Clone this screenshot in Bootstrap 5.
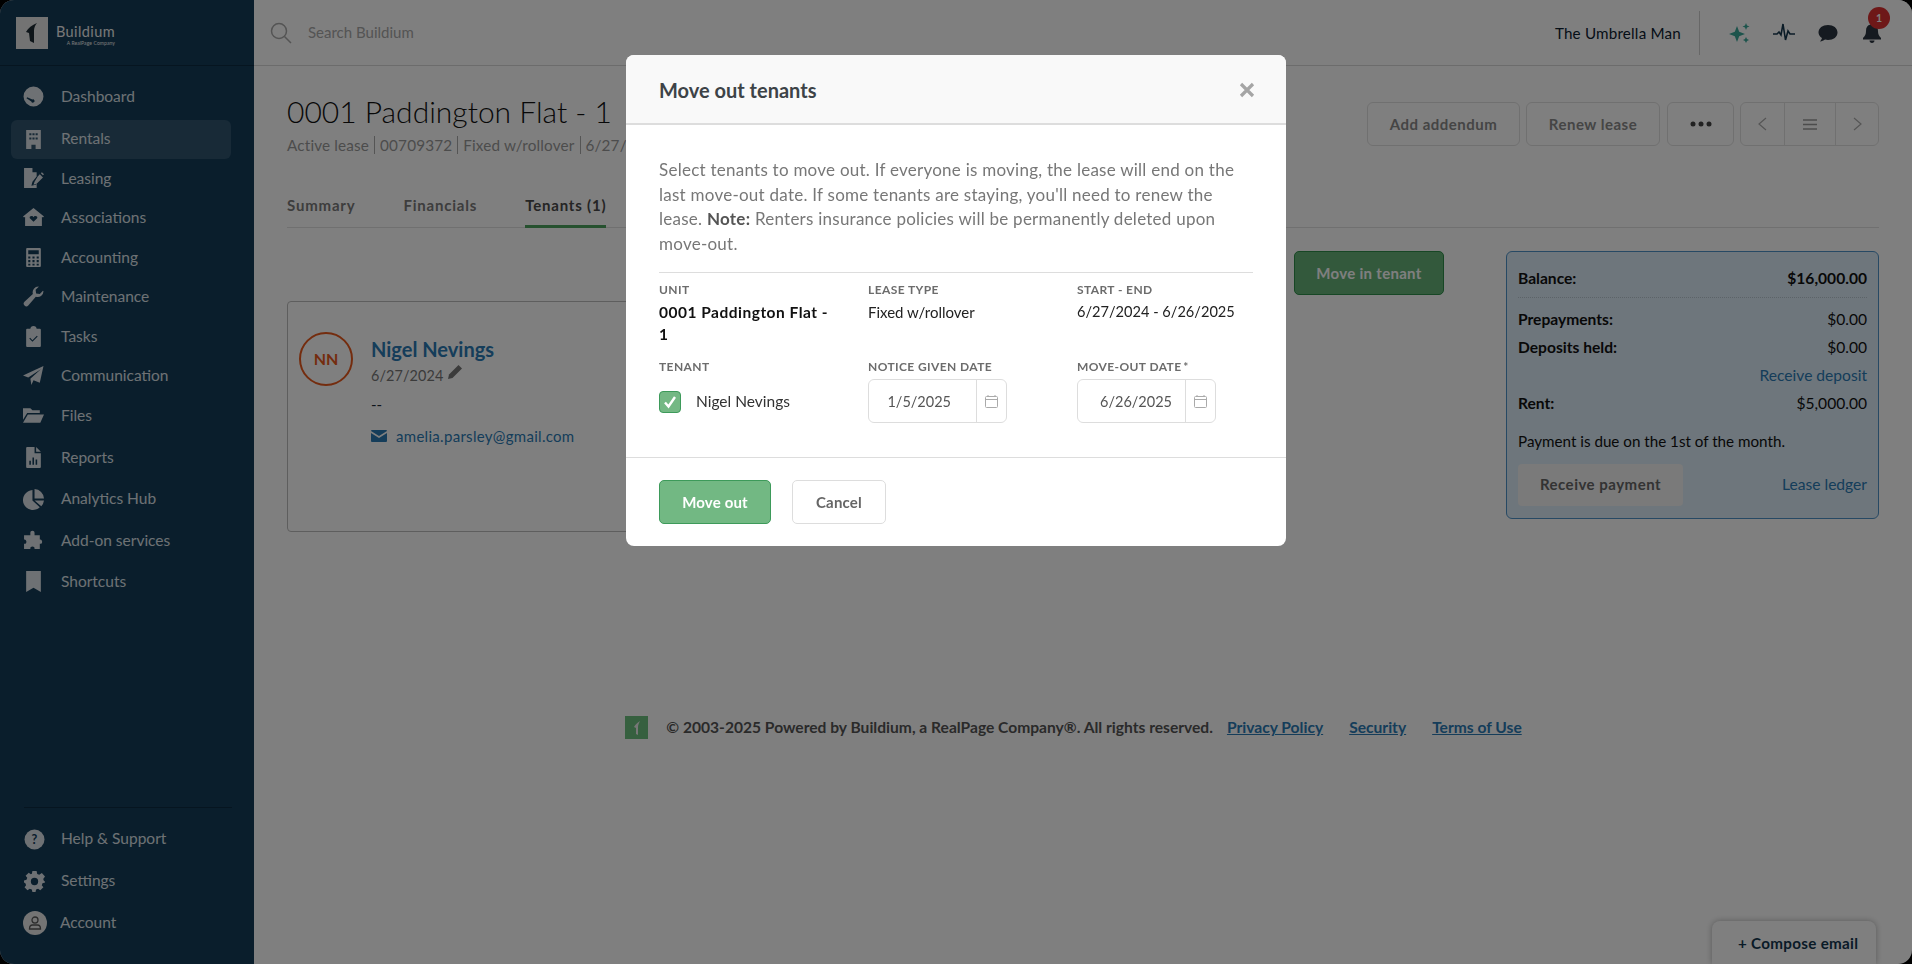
<!DOCTYPE html>
<html lang="en">
<head>
<meta charset="utf-8">
<title>Move out tenants</title>
<link href="https://cdn.jsdelivr.net/npm/bootstrap@5.3.0/dist/css/bootstrap.min.css" rel="stylesheet">
<style>
html,body{height:100%;overflow:hidden;background:#000}
body{font-family:"Lato","Liberation Sans",sans-serif;color:#1c2b36;font-size:15px}
.app-frame{height:964px;width:1912px;display:flex;background:#fff;border-radius:14px;overflow:hidden}
.side-rail{width:254px;flex:none;background:#143c59;color:#dde3e8;display:flex;flex-direction:column}
.side-brand{height:66px;flex:none;border-bottom:1px solid #0d2a40;display:flex;align-items:center;padding:0 16px;gap:8px}
.brand-text{line-height:1;color:#f0f0f0;font-size:14.5px;letter-spacing:.4px;margin-top:6px}
.brand-text span{display:block;font-size:5px;text-align:right;letter-spacing:.1px;margin-top:2px}
.side-nav{padding-top:11px;flex:1}
.nav-row{height:39.5px;display:flex;align-items:center;gap:17px;font-size:15.5px;margin:0 23px 0 11px;padding-left:12px;border-radius:6px}
.nav-row svg{width:21px;height:21px;flex:none;fill:currentColor}
.nav-row.current{background:#30546e;height:39px;margin-top:3px}
.nav-row.roomy{height:41.4px}
.nav-row.first-roomy{margin-top:2px}
.side-foot{border-top:1px solid #0d2a40;margin:0 22px 0 24px;padding-top:10px;height:157px}
.side-foot .nav-row{margin:0;padding-left:0;height:42px;gap:16px}
.side-foot .nav-row.acct-row{gap:13px}
.acct-dot{width:24px;height:24px;flex:none;border-radius:50%;background:#e8e8e8;color:#555;display:flex;align-items:center;justify-content:center;margin-left:-1px}
.acct-dot svg{width:16px;height:16px;fill:none;stroke:#5a5a5a;stroke-width:1.3}
.work-area{flex:1;display:flex;flex-direction:column;min-width:0;position:relative}
.top-strip{height:66px;flex:none;border-bottom:1px solid #d8d8d8;display:flex;align-items:center;padding:0 29px 0 16px;background:#fff}
.search-word{color:#a8a8a8;font-size:15px;margin-left:16px}
.org-name{font-size:15.2px;letter-spacing:.2px;color:#0d2030;padding-right:18px;height:44px;line-height:44px;border-right:1px solid #cfcfcf;margin-right:29px}
.tool-ico{width:22px;height:22px;margin-right:22px;position:relative}
.tool-ico svg{width:22px;height:22px;display:block}
.tool-ico:last-child{margin-right:0}
.bell-count{position:absolute;top:-15px;left:7px;width:22px;height:22px;border-radius:50%;background:#dc3030;color:#fff;font-size:10.5px;font-weight:700;text-align:center;line-height:22px}
.page-body{padding:0 33px;flex:1;display:flex;flex-direction:column}
.head-row{display:flex;justify-content:space-between;padding-top:27px;height:113px}
.page-title{font-size:30px;font-weight:300;color:#111;line-height:36px;margin:0}
.page-sub{font-size:15.3px;color:#999;margin-top:7px;line-height:18px;letter-spacing:.15px}
.page-sub i{font-style:normal;border-left:1px solid #aaa;margin:0 5px}
.action-set{display:flex;margin-top:9px}
.ghost-btn{height:44px;border:1px solid #e0e0e0;border-radius:6px;background:#fff;color:#8a8a8a;font-weight:700;font-size:15px;letter-spacing:.5px;padding:0;display:flex;align-items:center;justify-content:center}
.btn-addendum{width:153px;margin-right:6px}.btn-renew{width:134px;margin-right:7px}.btn-more{width:67px;margin-right:6px}
.pager-set{display:flex;width:139px;height:44px;border:1px solid #e0e0e0;border-radius:6px}
.pager-set div{display:flex;align-items:center;justify-content:center;height:100%}
.pager-set div:nth-child(1){width:44px;border-right:1px solid #e0e0e0}
.pager-set div:nth-child(2){width:51px;border-right:1px solid #e0e0e0}
.pager-set div:nth-child(3){flex:1}
.tab-strip{display:flex;gap:48px;height:49px;border-bottom:1px solid #e0e0e0;font-weight:700;font-size:15px;letter-spacing:.8px;color:#7a7a7a}
.tab-strip div{height:49px;padding-top:15px}
.tab-strip .on{color:#4a4a4a;border-bottom:3px solid #4da35f}
.content-row{display:flex;gap:62px;padding-top:23px}
.left-pane{flex:1;min-width:0}
.cta-green{height:44px;width:150px;margin-left:auto;background:#66b279;border:1px solid #2f8f4a;border-radius:5px;color:#fff;font-weight:700;font-size:15px;letter-spacing:.3px;display:flex;align-items:center;justify-content:center}
.person-card{margin-top:6px;height:231px;width:800px;border:1px solid #bdbdbd;border-radius:4px;padding:30px 11px;display:flex;gap:18px}
.avatar-ring{width:54px;height:54px;border:2px solid #e8591c;border-radius:50%;color:#e8591c;font-weight:700;font-size:16px;display:flex;align-items:center;justify-content:center;flex:none}
.person-name{font-size:20px;font-weight:700;color:#2a7ab5;line-height:24px;margin-top:5px}
.person-date{font-size:14.4px;color:#777;margin-top:4px;display:flex;align-items:center;gap:4px;letter-spacing:.1px}
.person-date svg{margin-top:-7px}
.person-dash{font-size:15px;margin-top:8px;line-height:18px}
.person-mail{font-size:15px;color:#2a7ab5;margin-top:12px;display:flex;align-items:center;gap:9px;letter-spacing:.3px}
.money-box{width:373px;height:268px;flex:none;background:#dcecf8;border:1px solid #4f93c8;border-radius:6px;padding:0 11px;font-size:15.6px;line-height:22.5px;color:#111}
.money-line{display:flex;justify-content:space-between}
.money-line b{font-weight:700}
.bal-line{padding:15px 0 7px;border-bottom:1px dotted #b8c6d0;font-weight:700}
.prep-line{margin-top:10px}.dep-line{margin-top:5.5px}.rec-line{margin-top:6px}.rent-line{margin-top:5.5px}.due-line{margin-top:15px;font-size:15.2px}.pay-line{margin-top:11.5px}
.money-link{color:#2a7ab5}
.pay-btn{width:165px;height:42px;background:#f4f4f4;border-radius:4px;color:#666;font-weight:700;font-size:15px;display:flex;align-items:center;justify-content:center;letter-spacing:.5px}
.foot-line{position:absolute;left:0;right:19px;top:716px;display:flex;justify-content:center;align-items:center;font-size:15.6px;color:#555}
.foot-line a{color:#2a7ab5;margin-left:26px;font-weight:700}
.foot-line .credit{font-weight:700;margin:0 -12px 0 18px}
.compose-tab{position:absolute;right:36px;bottom:0;width:164px;height:43px;background:#fff;border-radius:8px 8px 0 0;box-shadow:0 0 6px rgba(0,0,0,.3);padding:13px 0 0 26px;font-weight:700;font-size:15.2px;color:#14364f;letter-spacing:.3px;line-height:18px}
.modal.out-modal{display:block}
.out-modal .modal-dialog{max-width:660px;width:660px;margin:55px 0 0 626px}
.out-modal .modal-content{border:0;border-radius:8px;overflow:hidden;height:491px}
.out-modal .modal-header{height:70px;background:#f9f9f9;border-bottom:2px solid #ddd;padding:2px 31px 0 33px;border-radius:0}
.out-modal .modal-title{font-size:20px;font-weight:700;color:#3d4347}
.x-close{width:16px;height:16px;display:block}
.out-modal .modal-body{padding:33px 33px 0;height:332px;flex:none}
.lead-copy{font-size:17px;letter-spacing:.25px;line-height:24.5px;color:#777;margin:0 0 16px;width:590px}
.lead-copy b{color:#555}
.fact-grid{border-top:1px solid #ddd;display:grid;grid-template-columns:209px 209px 1fr;padding-top:9px}
.fact-label{font-size:12px;font-weight:700;color:#6c6c6c;letter-spacing:.4px;line-height:16px}
.fact-val{font-size:15px;color:#222;line-height:22px;margin-top:3px;height:44px}
.fact-val.strong{font-weight:700;color:#111;width:175px;font-size:15.5px;letter-spacing:.5px}
.fact-val.range{font-size:14.6px}
.second-row{padding-top:14px}
.out-check{display:flex;align-items:center;margin-top:15px;gap:15px;font-size:15.5px;color:#333}
.check-box{width:22px;height:22px;background:#74b884;border:1px solid #3d9a5a;border-radius:4px;display:flex;align-items:center;justify-content:center}
.date-field{display:flex;width:139px;height:44px;border:1px solid #ddd;border-radius:6px;margin-top:4px;font-size:14.5px;color:#555}
.date-field .dval{width:108px;border-right:1px solid #ddd;display:flex;align-items:center;justify-content:flex-end;padding:2px 25px 0 0}
.date-field .dico{flex:1;display:flex;align-items:center;justify-content:center}
.date-field.wide .dval{padding-right:13px}
.out-modal .modal-footer{justify-content:flex-start;border-top:1px solid #ddd;padding:22px 33px;gap:21px;border-radius:0;height:89px}
.out-modal .modal-footer>*{margin:0}
.btn-moveout{width:112px;height:44px;background:#72b883;border:1px solid #3d9a5a;color:#fff;font-weight:700;font-size:15px;border-radius:5px;padding:0;letter-spacing:.15px}
.btn-cancel{width:94px;height:44px;background:#fff;border:1px solid #ddd;color:#666;font-weight:700;font-size:15px;border-radius:5px;padding:0;letter-spacing:.2px}
</style>
</head>
<body>
<div class="app-frame">
  <aside class="side-rail">
    <div class="side-brand">
      <svg width="32" height="32" viewBox="0 0 32 32"><rect width="32" height="32" fill="#e6e6e6"/><path d="M21 6C16 8 12 11 10 15l3 1 1 8 4 2V14c0-3 1-6 3-8z" fill="#1d2a33"/></svg>
      <div class="brand-text">Buildium<span>A RealPage Company</span></div>
    </div>
    <nav class="side-nav">
      <div class="nav-row"><svg viewBox="0 0 20 20"><path fill-rule="evenodd" d="M10 .5a9.5 9.5 0 1 1 0 19 9.5 9.5 0 0 1 0-19zM4 10.6l-.7 1 4.6 3.2a1.6 1.6 0 1 0 1-2z"/></svg>Dashboard</div>
      <div class="nav-row current"><svg viewBox="0 0 20 20"><path fill-rule="evenodd" d="M3 1h14v18h-5v-4H8v4H3zM6 4v2h2V4zM9 4v2h2V4zM12 4v2h2V4zM6 8v2h2V8zM9 8v2h2V8zM12 8v2h2V8z"/></svg>Rentals</div>
      <div class="nav-row"><svg viewBox="0 0 20 20"><path d="M1 0h8l4 4v4l-4 5-1 4 4-1 1-1v4H1zM9 0v4h4z"/><path d="M14 8l2-2 3 3-6 6-3 1 1-3zM17 5l1-1 2 2-1 1z"/></svg>Leasing</div>
      <div class="nav-row"><svg viewBox="0 0 20 20"><path fill-rule="evenodd" d="M10 1l10 8-1 1-1-.6V18H2V9.400L1 10 0 9zM10 14l3.500-3.400c1-1.600-2.500-3-3.500-.8-1-2.200-4.500-.8-3.500.8z"/></svg>Associations</div>
      <div class="nav-row"><svg viewBox="0 0 20 20"><path fill-rule="evenodd" d="M4 1h12a1 1 0 0 1 1 1v16a1 1 0 0 1-1 1H4a1 1 0 0 1-1-1V2a1 1 0 0 1 1-1zM5 3v4h10V3zM5 9v2h2V9zM9 9v2h2V9zM13 9v2h2V9zM5 12.500v2h2v-2zM9 12.500v2h2v-2zM13 12.500v2h2v-2zM5 16v1.500h2V16zM9 16v1.500h2V16zM13 16v1.500h2V16z"/></svg>Accounting</div>
      <div class="nav-row"><svg viewBox="0 0 20 20"><path d="M19.500 5a5.500 5.500 0 0 1-7.300 5.200L5 18.500a2.500 2.500 0 0 1-3.600-3.500l8-7.400A5.500 5.500 0 0 1 15 .6l-3 3 .5 3.500 3.500.5 3-3c.3.100.5.200.5.400z"/></svg>Maintenance</div>
      <div class="nav-row"><svg viewBox="0 0 20 20"><path fill-rule="evenodd" d="M7 2.500c0-1.300 1.300-2.500 3-2.500s3 1.200 3 2.500h3a1 1 0 0 1 1 1V19a1 1 0 0 1-1 1H4a1 1 0 0 1-1-1V3.500a1 1 0 0 1 1-1zM6 12l3 3 5-5-.8-.8L9 13.500 6.800 11.200z"/></svg>Tasks</div>
      <div class="nav-row"><svg viewBox="0 0 20 20"><path d="M19.500 1L16 17l-6-2.500L8 19l-1-6L17 4 5 11.800 0 10z"/></svg>Communication</div>
      <div class="nav-row"><svg viewBox="0 0 20 20"><path d="M0 3h7l2 2h7v2.500H4L0 14zM4.600 9H20l-3.500 8H0z"/></svg>Files</div>
      <div class="nav-row roomy first-roomy"><svg viewBox="0 0 20 20"><path fill-rule="evenodd" d="M4 0h7v6h6v13a1 1 0 0 1-1 1H4a1 1 0 0 1-1-1V1a1 1 0 0 1 1-1zM6 13v4h1.500v-4zM9 10v7h1.500v-7zM12 12v5h1.500v-5zM12.500 0L17 4.500h-4.500z"/></svg>Reports</div>
      <div class="nav-row roomy"><svg viewBox="0 0 20 20"><path d="M9 1v10l7 6.400A9.500 9.500 0 1 1 9 1zM11 0a9.500 9.500 0 0 1 9 9H11zM11 11h9a9.500 9.500 0 0 1-2.600 5.400z"/></svg>Analytics Hub</div>
      <div class="nav-row roomy"><svg viewBox="0 0 20 20"><path d="M7 3c-.3-3 4.300-3 4-.0v2h5v4c3-.5 3 5 0 4v5h-5c.5-3-4.500-3-4 0H1v-5c3 1 3-4.500 0-4V5h6z"/></svg>Add-on services</div>
      <div class="nav-row roomy"><svg viewBox="0 0 20 20"><path d="M3 0h14v20l-7-4-7 4z"/></svg>Shortcuts</div>
    </nav>
    <div class="side-foot">
      <div class="nav-row"><svg viewBox="0 0 20 20"><circle cx="10" cy="10" r="9.500"/><text x="10" y="14.500" text-anchor="middle" font-size="12" font-weight="700" font-family="Lato,sans-serif" fill="#143c59">?</text></svg>Help &amp; Support</div>
      <div class="nav-row"><svg viewBox="0 0 20 20"><path fill-rule="evenodd" d="M8 0h4l.6 2.800 1.900.8L17 2l3 3.300-1.700 2.300.7 1.900L20 10v1l-2.400.6-.7 1.900L18.500 15.500 15.500 18.300l-2.100-1.500-1.900.8L11 20H8l-.6-2.400-1.900-.8L3.300 18.300 .5 15.500 2 13.500l-.7-1.900L0 11V9l2.400-.6.700-1.900L1.500 4.500 4.500 1.700l2 1.500 1-.5zM10 6.500a3.500 3.500 0 1 0 0 7 3.500 3.500 0 0 0 0-7z"/></svg>Settings</div>
      <div class="nav-row acct-row"><span class="acct-dot"><svg viewBox="0 0 16 16"><circle cx="8" cy="5" r="3"/><path d="M2.500 14c0-2.500 1.500-4 3-4h5c1.500 0 3 1.500 3 4z"/></svg></span>Account</div>
    </div>
  </aside>

  <main class="work-area">
    <header class="top-strip">
      <svg width="22" height="22" viewBox="0 0 22 22" fill="none" stroke="#a8a8a8" stroke-width="1.500"><circle cx="9" cy="9" r="7.500"/><path d="M14.500 14.500l6.500 6.500"/></svg>
      <span class="search-word">Search Buildium</span>
      <span class="org-name ms-auto">The Umbrella Man</span>
      <div class="tool-ico"><svg viewBox="0 0 22 22" fill="#3aa899"><path d="M8 4l2.200 5.800L16 12l-5.800 2.200L8 20l-2.200-5.800L0 12l5.800-2.200zM17 1l1 2.500L20.500 4.500 18 5.500 17 8l-1-2.500L13.500 4.500 16 3.500zM17 15l1 2 2 1-2 1-1 2-1-2-2-1 2-1z"/></svg></div>
      <div class="tool-ico"><svg viewBox="0 0 22 22" fill="none" stroke="#17384f" stroke-width="1.600"><path d="M0 12h4l2-2 2 3 2-11 2.500 16 2.500-9 2 3h5"/></svg></div>
      <div class="tool-ico"><svg viewBox="0 0 22 22" fill="#2b3540"><path d="M11 3c5.500 0 9.500 3 9.500 7.500S16.500 18 11 18c-1 0-2-.1-3-.4-1.500 1.200-3 1.800-5 1.900 1-1 1.700-2.200 2-3.500-2.200-1.300-3.500-3.300-3.500-5.500C1.500 6 5.500 3 11 3z"/></svg></div>
      <div class="tool-ico"><svg viewBox="0 0 22 22" fill="#2b3540"><path d="M11 1c1 0 1.500.7 1.500 1.500 3.200.7 4.500 3 4.500 6.500 0 3.500 1 5 3 7v1.500H2V16c2-2 3-3.500 3-7 0-3.500 1.300-5.800 4.500-6.500C9.500 1.700 10 1 11 1zM8.500 18.500h5c0 1.500-1 2.500-2.500 2.500s-2.500-1-2.500-2.500z"/></svg><span class="bell-count">1</span></div>
    </header>

    <section class="page-body">
      <div class="head-row">
        <div>
          <h1 class="page-title">0001 Paddington Flat - 1</h1>
          <div class="page-sub">Active lease<i></i>00709372<i></i>Fixed w/rollover<i></i>6/27/2024 - 6/26/2025</div>
        </div>
        <div class="action-set">
          <div class="ghost-btn btn-addendum">Add addendum</div>
          <div class="ghost-btn btn-renew">Renew lease</div>
          <div class="ghost-btn btn-more"><svg width="24" height="6" viewBox="0 0 24 6" fill="#444"><circle cx="4" cy="3" r="2.500"/><circle cx="12" cy="3" r="2.500"/><circle cx="20" cy="3" r="2.500"/></svg></div>
          <div class="pager-set">
            <div><svg width="9" height="14" viewBox="0 0 9 14" fill="none" stroke="#aaa" stroke-width="1.200"><path d="M8 1L1 7l7 6"/></svg></div>
            <div><svg width="14" height="11" viewBox="0 0 14 11" fill="none" stroke="#999" stroke-width="1.400"><path d="M0 1h14M0 5.500h14M0 10h14"/></svg></div>
            <div><svg width="9" height="14" viewBox="0 0 9 14" fill="none" stroke="#aaa" stroke-width="1.200"><path d="M1 1l7 6-7 6"/></svg></div>
          </div>
        </div>
      </div>
      <div class="tab-strip"><div>Summary</div><div>Financials</div><div class="on">Tenants (1)</div></div>
      <div class="content-row">
        <div class="left-pane">
          <div class="cta-green">Move in tenant</div>
          <div class="person-card">
            <div class="avatar-ring">NN</div>
            <div>
              <div class="person-name">Nigel Nevings</div>
              <div class="person-date">6/27/2024 <svg width="16" height="16" viewBox="0 0 16 16" fill="#777"><path d="M11.500 1l3.500 3.500-9.500 9.500L1 15l1-4.500z"/></svg></div>
              <div class="person-dash">--</div>
              <div class="person-mail"><svg width="16" height="12" viewBox="0 0 16 12" fill="#2a7ab5"><path d="M1 0h14a1 1 0 0 1 1 1L8 6 0 1a1 1 0 0 1 1-1zM0 3l8 5 8-5v8a1 1 0 0 1-1 1H1a1 1 0 0 1-1-1z"/></svg>amelia.parsley@gmail.com</div>
            </div>
          </div>
        </div>
        <aside class="money-box">
          <div class="money-line bal-line"><span>Balance:</span><span>$16,000.00</span></div>
          <div class="money-line prep-line"><b>Prepayments:</b><span>$0.00</span></div>
          <div class="money-line dep-line"><b>Deposits held:</b><span>$0.00</span></div>
          <div class="text-end money-link rec-line">Receive deposit</div>
          <div class="money-line rent-line"><b>Rent:</b><span>$5,000.00</span></div>
          <div class="due-line">Payment is due on the 1st of the month.</div>
          <div class="d-flex justify-content-between align-items-center pay-line"><div class="pay-btn">Receive payment</div><span class="money-link">Lease ledger</span></div>
        </aside>
      </div>
    </section>
    <div class="foot-line">
      <svg width="23" height="23" viewBox="0 0 23 23"><rect width="23" height="23" fill="#6cc07e"/><path d="M15 5c-3 2-5 4-6 6l2 1v6l2 1V11c0-2 1-4 2-6z" fill="#eee"/></svg>
      <span class="credit">© 2003-2025 Powered by Buildium, a RealPage Company®. All rights reserved.</span>
      <a href="#">Privacy Policy</a><a href="#">Security</a><a href="#">Terms of Use</a>
    </div>
    <div class="compose-tab">+ Compose email</div>
  </main>
</div>

<div class="modal-backdrop show"></div>
<div class="modal out-modal" tabindex="-1">
  <div class="modal-dialog">
    <div class="modal-content">
      <div class="modal-header">
        <h5 class="modal-title">Move out tenants</h5>
        <svg class="x-close ms-auto" viewBox="0 0 16 16" fill="none" stroke="#a5a5a5" stroke-width="3.200"><path d="M2 2l12 12M14 2L2 14"/></svg>
      </div>
      <div class="modal-body">
        <p class="lead-copy">Select tenants to move out. If everyone is moving, the lease will end on the last move-out date. If some tenants are staying, you'll need to renew the lease. <b>Note:</b> Renters insurance policies will be permanently deleted upon move-out.</p>
        <div class="fact-grid">
          <div><div class="fact-label">UNIT</div><div class="fact-val strong">0001 Paddington Flat - 1</div></div>
          <div><div class="fact-label">LEASE TYPE</div><div class="fact-val">Fixed w/rollover</div></div>
          <div><div class="fact-label">START - END</div><div class="fact-val range">6/27/2024 - 6/26/2025</div></div>
          <div class="second-row"><div class="fact-label">TENANT</div><div class="out-check"><span class="check-box"><svg width="14" height="14" viewBox="0 0 14 14" fill="none" stroke="#fff" stroke-width="2.400"><path d="M2 7.500l3.500 4L12 2"/></svg></span>Nigel Nevings</div></div>
          <div class="second-row"><div class="fact-label">NOTICE GIVEN DATE</div><div class="date-field"><div class="dval">1/5/2025</div><div class="dico"><svg width="13" height="13" viewBox="0 0 13 13" fill="none" stroke="#aaa"><rect x=".5" y="1.500" width="12" height="11" rx="1"/><path d="M.5 4.500h12M3 0v2M10 0v2"/></svg></div></div></div>
          <div class="second-row"><div class="fact-label">MOVE-OUT DATE&#8201;*</div><div class="date-field wide"><div class="dval">6/26/2025</div><div class="dico"><svg width="13" height="13" viewBox="0 0 13 13" fill="none" stroke="#aaa"><rect x=".5" y="1.500" width="12" height="11" rx="1"/><path d="M.5 4.500h12M3 0v2M10 0v2"/></svg></div></div></div>
        </div>
      </div>
      <div class="modal-footer">
        <button type="button" class="btn btn-moveout">Move out</button>
        <button type="button" class="btn btn-cancel">Cancel</button>
      </div>
    </div>
  </div>
</div>
<script src="https://cdn.jsdelivr.net/npm/bootstrap@5.3.0/dist/js/bootstrap.bundle.min.js"></script>
</body>
</html>
